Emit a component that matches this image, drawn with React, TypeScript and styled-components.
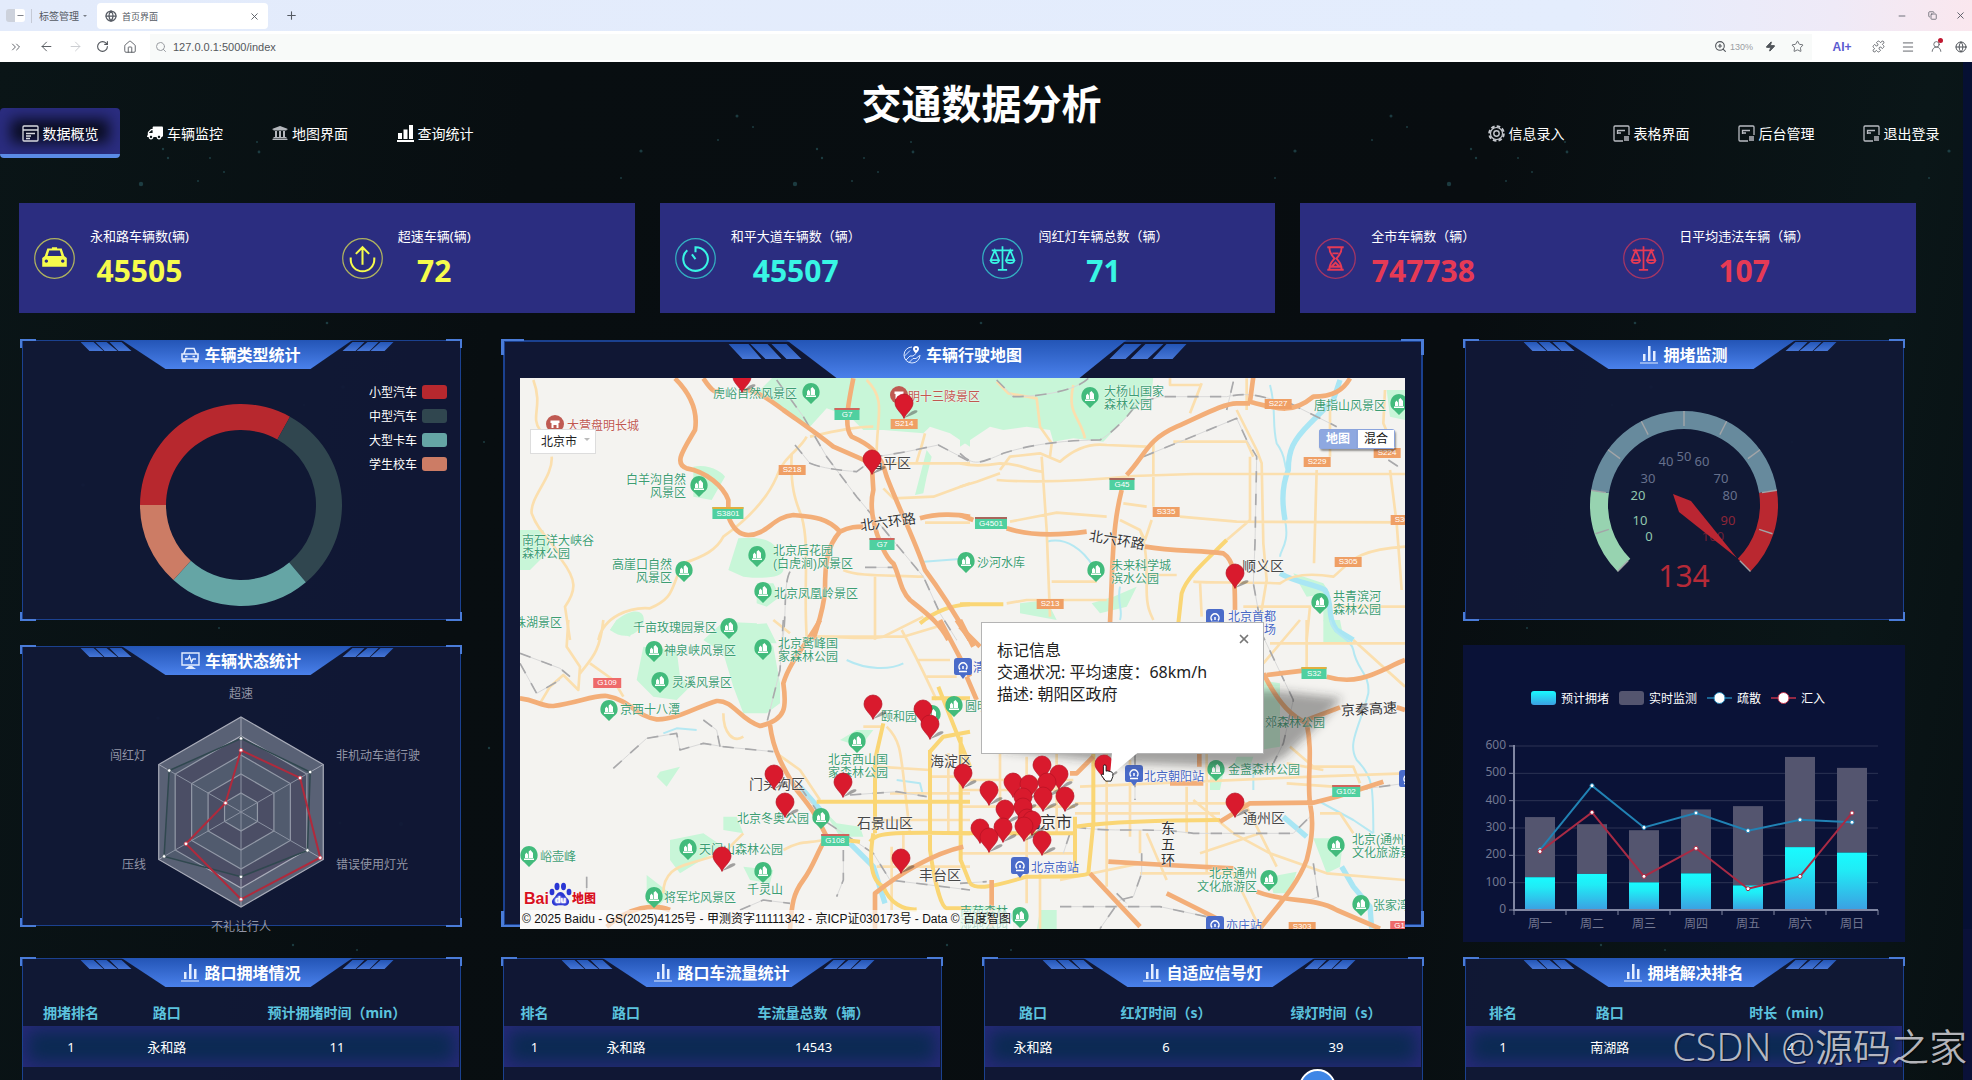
import React from "react";
import styled, { createGlobalStyle, css } from "styled-components";
import {
  ArrowLeft, ArrowRight, ChevronsRight, Copy, Globe, House, Menu, Minus, Plus, Puzzle,
  RotateCw, Search, Star, UserRound, X, Zap, ZoomIn,
} from "lucide-react";
import { FaTruck, FaUniversity } from "react-icons/fa";

const sans = `"Noto Sans", "Noto Sans CJK SC", sans-serif`;
const arial = `"Liberation Sans", "Noto Sans CJK SC", sans-serif`;

const GlobalStyle = createGlobalStyle`
  *, *::before, *::after { box-sizing: border-box; }
  body { margin: 0; background: #080e11; font-family: ${sans}; }
  button, input, select { font: inherit; margin: 0; padding: 0; border: 0; background: none; color: inherit; }
  a { color: inherit; text-decoration: none; }
  h1, h2, p { margin: 0; }
  svg { display: block; flex: none; }
`;

const Window = styled.div`
  display: flex;
  flex-direction: column;
  height: 100vh;
  overflow: hidden;
  position: relative;
`;

/* ---------- browser bar ---------- */

const TabStrip = styled.div`
  flex: none;
  height: 31px;
  display: flex;
  align-items: center;
  padding: 0 0 0 6px;
  color: #555a63;
  font-size: 10px;
  background: linear-gradient(90deg, #e3ebfb 0, #e4edfd 80%, #efeaf7 93%, #fae7ee 100%);
`;
const SideToggle = styled.button`
  width: 19px;
  height: 13px;
  border-radius: 3px;
  background: linear-gradient(90deg, #cdd2dc 0 9px, #fff 9px);
  display: flex;
  justify-content: flex-end;
  align-items: center;
`;
const TabManager = styled.button`
  display: flex;
  align-items: center;
  gap: 4px;
  margin-left: 6px;
  padding: 0 0 0 7px;
  border-left: 1px solid #c5cad6;
  line-height: 14px;
  width: 66px;
  &::after {
    content: "";
    border: 2px solid transparent;
    border-top-color: #777c86;
    border-bottom: 0;
  }
`;
const BrowserTab = styled.div`
  align-self: flex-end;
  width: 171px;
  height: 26px;
  margin-bottom: 2px;
  padding: 0 8px;
  display: flex;
  align-items: center;
  gap: 5px;
  background: #fff;
  border-radius: 4px;
  font-size: 9px;
`;
const TabName = styled.span`
  flex: 1;
`;
const IconButton = styled.button<{ $w: number; $dim?: boolean }>`
  width: ${(p) => p.$w}px;
  height: 24px;
  flex: none;
  display: flex;
  align-items: center;
  justify-content: center;
  position: relative;
  color: ${(p) => (p.$dim ? "#c9cbcf" : "inherit")};
`;
const Spring = styled.div`
  flex: 1;
`;
const Toolbar = styled.div`
  flex: none;
  height: 31px;
  display: flex;
  align-items: center;
  padding-left: 2px;
  color: #50545a;
  background: #fff;
`;
const AddressBar = styled.label`
  flex: 1;
  height: 26px;
  display: flex;
  align-items: center;
  margin-left: 6px;
  padding-left: 5px;
  background: #f8faf9;
  color: #9a9da2;
`;
const AddressInput = styled.input`
  flex: 1;
  min-width: 0;
  padding-left: 6px;
  outline: 0;
  color: #55585c;
  font-family: ${arial};
  font-size: 11px;
`;
const ZoomLevel = styled.span`
  width: 28px;
  font-family: ${arial};
  font-size: 9px;
`;
const AddressActions = styled.div`
  display: flex;
  height: 26px;
  align-items: center;
  margin-right: 10px;
  background: #f8faf9;
`;
const AiButton = styled.button`
  width: 40px;
  font: 700 12px/16px ${arial};
  color: #5b5bd0;
`;
const RedDot = styled.span`
  position: absolute;
  top: 3px;
  right: 7px;
  width: 5px;
  height: 5px;
  border-radius: 50%;
  background: #c01830;
`;

/* ---------- page ---------- */

const Viewport = styled.div`
  flex: 1;
  min-height: 0;
  display: flex;
  position: relative;
  color: #fff;
  background: linear-gradient(100deg, #0a1517 0, #080e11 25%, #080d10 70%, #0a1618 90%, #081012 100%);
`;
const Page = styled.div`
  flex: 1;
  min-width: 0;
  position: relative;
`;
const ScrollTrack = styled.div`
  flex: none;
  width: 9px;
  background: linear-gradient(180deg, #061033 0 867px, #0a1138 867px);
`;
const StarField = styled.svg`
  position: absolute;
  inset: 0;
  width: 100%;
  height: 100%;
`;
const Header = styled.header`
  position: relative;
  display: grid;
  grid-template-columns: 1fr auto 1fr;
  height: 96px;
`;
const Title = styled.h1`
  padding-top: 12px;
  font-size: 40px;
  line-height: 60px;
  font-weight: 700;
`;
const Nav = styled.nav<{ $end?: boolean }>`
  display: flex;
  align-items: flex-end;
  justify-content: ${(p) => (p.$end ? "flex-end" : "flex-start")};
  gap: 5px;
  padding-right: ${(p) => (p.$end ? 2 : 0)}px;
`;
const NavLink = styled.a<{ $active?: boolean }>`
  display: flex;
  align-items: center;
  justify-content: center;
  gap: 4px;
  width: 120px;
  height: 50px;
  padding-top: 4px;
  font-size: 14px;
  white-space: nowrap;
  border-radius: 4px;
  border-bottom: 4px solid transparent;
  ${(p) =>
    p.$active &&
    css`
      background: #090c20;
      border-bottom-color: #5b8be6;
      box-shadow: inset 0 0 14px 11px #2b2d80;
    `}
`;
const Stats = styled.section`
  position: relative;
  display: grid;
  grid-template-columns: repeat(3, 1fr);
  gap: 25px;
  margin: 45px 47px 26px 19px;
`;
const StatCard = styled.div<{ $color: string }>`
  display: grid;
  grid-template-columns: 1fr 1fr;
  height: 110px;
  padding-top: 22px;
  background: #2b2d80;
  color: ${(p) => p.$color};
`;
const Stat = styled.div`
  display: flex;
  align-items: flex-start;
  gap: 15px;
  padding-left: 15px;
  & > svg { margin-top: 13px; }
`;
const StatText = styled.div`
  text-align: center;
`;
const StatLabel = styled.p`
  color: #fff;
  font-size: 13px;
  line-height: 22px;
`;
const StatValue = styled.p`
  font-size: 30px;
  line-height: 48px;
  font-weight: 700;
`;
const Main = styled.main`
  position: relative;
  display: grid;
  grid-template-columns: repeat(4, 1fr);
  align-items: start;
  column-gap: 39px;
  row-gap: 15px;
  padding: 0 58px 0 20px;
`;
const Column = styled.div`
  display: grid;
  gap: 24px;
`;

const edge = "#4a7cd8";
const Panel = styled.section<{ $h: number; $big?: boolean }>`
  position: relative;
  height: ${(p) => p.$h}px;
  padding: 0 ${(p) => (p.$big ? 19 : 3)}px;
  grid-column: ${(p) => (p.$big ? "span 2" : "auto")};
  &::before {
    content: "";
    position: absolute;
    inset: 1px 1px 1px 2px;
    background: rgba(17, 24, 54, 0.94);
    border: ${(p) => (p.$big ? 2 : 1)}px solid #1b418f;
  }
  &::after {
    --w: ${(p) => (p.$big ? 23 : 16)}px;
    --h: ${(p) => (p.$big ? 16 : 9)}px;
    --t: ${(p) => (p.$big ? 3 : 2)}px;
    content: "";
    position: absolute;
    inset: 0;
    pointer-events: none;
    background:
      linear-gradient(${edge} 0 0) 0 0 / var(--w) 2px,
      linear-gradient(${edge} 0 0) 0 0 / var(--t) var(--h),
      linear-gradient(${edge} 0 0) 100% 0 / var(--w) 2px,
      linear-gradient(${edge} 0 0) 100% 0 / var(--t) var(--h),
      linear-gradient(${edge} 0 0) 0 100% / var(--w) 2px,
      linear-gradient(${edge} 0 0) 0 100% / var(--t) var(--h),
      linear-gradient(${edge} 0 0) 100% 100% / var(--w) 2px,
      linear-gradient(${edge} 0 0) 100% 100% / var(--t) var(--h);
    background-repeat: no-repeat;
  }
`;
const PanelHead = styled.header<{ $h: number }>`
  position: relative;
  display: flex;
  justify-content: center;
  height: ${(p) => p.$h}px;
  & > svg {
    position: absolute;
    top: 1px;
    left: 50%;
    transform: translateX(-50%);
  }
`;
const PanelTitle = styled.h2`
  position: relative;
  display: flex;
  align-items: center;
  gap: 5px;
  height: 32px;
  font-size: 16px;
  line-height: 24px;
  font-weight: 700;
`;
const PieBody = styled.div`
  position: relative;
  display: grid;
  grid-template-columns: 1fr auto 1fr;
  & > svg { grid-column: 2; }
`;
const Legend = styled.ul`
  grid-column: 3;
  grid-row: 1;
  justify-self: end;
  margin: 0 12px 0 0;
  padding: 0;
  list-style: none;
`;
const LegendItem = styled.li`
  display: flex;
  align-items: center;
  gap: 5px;
  height: 24px;
  font-size: 12px;
`;
const Swatch = styled.span<{ $color: string }>`
  width: 25px;
  height: 14px;
  border-radius: 3px;
  background: ${(p) => p.$color};
`;
const ChartBody = styled.div`
  position: relative;
  display: flex;
  justify-content: center;
`;
const PlainPanel = styled.section`
  height: 297px;
  padding-top: 43px;
  background: #0a1237;
`;
const ChartLegend = styled.ul`
  display: flex;
  justify-content: center;
  gap: 10px;
  height: 20px;
  margin: 0 12px 24px 0;
  padding: 0;
  list-style: none;
`;
const ChartLegendItem = styled.li`
  display: flex;
  align-items: center;
  gap: 5px;
  font-size: 12px;
`;
const DataTable = styled.table`
  position: relative;
  width: 100%;
  table-layout: fixed;
  border-collapse: collapse;
  text-align: center;
  th {
    height: 28px;
    padding: 0;
    color: #5cc3de;
    font-size: 14px;
    font-weight: 700;
  }
  td {
    height: 41px;
    padding: 0;
    font-size: 13px;
  }
  tbody tr {
    background: #0b2a52;
    box-shadow: inset 0 0 18px 4px #29297a;
  }
`;
const Col = styled.col<{ $w: number }>`
  width: ${(p) => p.$w}%;
`;

/* ---------- map ---------- */

const MapBox = styled.div`
  position: relative;
  z-index: 1;
  height: 551px;
  overflow: hidden;
  background: #f4f3f0;
  & > svg { position: absolute; top: 0; left: 0; }
`;
const tone: Record<string, string> = { park: "#3d9d73", red: "#c05850", dark: "#484848", blue: "#4767c4", road: "#333333" };
const MapLabel = styled.span<{ $x: number; $y: number; $tone: string; $size: number; $end?: boolean; $rot?: number }>`
  position: absolute;
  top: ${(p) => p.$y - 8}px;
  ${(p) => (p.$end ? css`right: calc(100% - ${p.$x}px);` : css`left: ${p.$x}px;`)}
  text-align: ${(p) => (p.$end ? "right" : "left")};
  font: 400 ${(p) => p.$size}px/13px ${arial};
  line-height: ${(p) => (p.$size > 12 ? 16 : 13)}px;
  padding-top: ${(p) => (p.$size > 12 ? 0 : 2)}px;
  color: ${(p) => tone[p.$tone]};
  white-space: pre;
  text-shadow: 0 0 1px #fff, 0 0 2px #fff;
  rotate: ${(p) => p.$rot || 0}deg;
`;
const Shield = styled.span<{ $x: number; $y: number; $bg: string; $top?: string }>`
  position: absolute;
  left: ${(p) => p.$x}px;
  top: ${(p) => p.$y}px;
  translate: -50% -50%;
  min-width: 25px;
  padding: 0 4px;
  font: 400 8px/10px ${arial};
  text-align: center;
  color: #fff;
  background: ${(p) => p.$bg};
  border-top: ${(p) => (p.$top ? `2px solid ${p.$top}` : 0)};
`;
const Spot = styled.span<{ $x: number; $y: number }>`
  position: absolute;
  left: ${(p) => p.$x}px;
  top: ${(p) => p.$y}px;
`;
const CityPicker = styled.label`
  position: absolute;
  top: 51px;
  left: 10px;
  &::after {
    content: "";
    position: absolute;
    right: 6px;
    top: 9px;
    border: 3px solid transparent;
    border-top-color: #bbb;
  }
`;
const CitySelect = styled.select`
  appearance: none;
  width: 66px;
  height: 25px;
  padding-left: 10px;
  color: #222;
  font-size: 12px;
  background: #fff;
  border: 1px solid #ddd;
`;
const MapTypes = styled.div`
  position: absolute;
  top: 51px;
  right: 10px;
  display: flex;
  border-radius: 3px;
  overflow: hidden;
  box-shadow: 1px 2px 2px rgba(0, 0, 0, 0.4);
`;
const MapType = styled.button<{ $on?: boolean }>`
  width: 38px;
  height: 20px;
  font-size: 12px;
  line-height: 18px;
  font-weight: ${(p) => (p.$on ? 700 : 400)};
  color: ${(p) => (p.$on ? "#fff" : "#111")};
  background: ${(p) => (p.$on ? "#8ea8e0" : "#fff")};
  border: 1px solid #8ba4dc;
`;
const Popup = styled.div`
  position: absolute;
  left: 461px;
  top: 244px;
  width: 283px;
  height: 132px;
  padding: 16px 15px;
  color: #222;
  font-size: 16px;
  line-height: 22px;
  background: #fff;
  border: 1px solid #b4b4b4;
`;
const PopupClose = styled.button`
  position: absolute;
  top: 9px;
  right: 12px;
  color: #777;
`;
const BaiduLogo = styled.div`
  position: absolute;
  left: 4px;
  bottom: 22px;
  display: flex;
  align-items: flex-end;
  color: #d8101e;
  font: 700 16px/16px ${arial};
  text-shadow: 0 0 2px #fff, 0 0 2px #fff;
`;
const LogoSmall = styled.span`
  font-size: 12px;
  font-weight: 900;
`;
const Copyright = styled.p`
  position: absolute;
  left: 0;
  bottom: 0;
  padding: 0 2px;
  font: 400 12px/19px ${arial};
  color: #111;
  background: rgba(255, 255, 255, 0.6);
  white-space: nowrap;
`;
const Bubble = styled.button`
  position: absolute;
  left: calc(66.8% - 18px);
  top: calc(100vh - 11px);
  width: 37px;
  height: 37px;
  border-radius: 50%;
  border: 2px solid #fff;
  background: #3f86e6;
`;
const Watermark = styled.div`
  position: absolute;
  right: 5px;
  bottom: 6px;
  font-size: 38px;
  line-height: 56px;
  font-weight: 350;
  white-space: nowrap;
  color: rgba(212, 212, 218, 0.85);
  text-shadow: 1px 1px 1px rgba(0, 0, 0, 0.5);
  pointer-events: none;
`;

/* ---------- icons ---------- */

const DocIcon = () => (
  <svg width="17" height="17" viewBox="0 0 17 17" fill="none" stroke="#d8dae0" strokeWidth="1.3">
    <rect x="1" y="1" width="15" height="15" rx="1" />
    <path d="M1 5h15M4 8.500h9M4 11h5M4 13.500h4" />
  </svg>
);
const FormIcon = () => (
  <svg width="17" height="17" viewBox="0 0 17 17" fill="none" stroke="#b9bcc2" strokeWidth="1.300">
    <path d="M10 16H2a1 1 0 0 1-1-1V2a1 1 0 0 1 1-1h13a1 1 0 0 1 1 1v8M4.500 9V5.500H12M4.500 8H8" />
    <rect x="11" y="11" width="5" height="5" fill="#8d9096" stroke="none" />
  </svg>
);
const GearIcon = () => (
  <svg width="17" height="17" viewBox="0 0 17 17" fill="none" stroke="#c4c7cd">
    <circle cx="8.500" cy="8.500" r="7.300" strokeWidth="2" strokeDasharray="3.600 2.133" />
    <circle cx="8.500" cy="8.500" r="6" strokeWidth="1.200" />
    <circle cx="8.500" cy="8.500" r="2.700" strokeWidth="1.400" />
  </svg>
);
const SolidBars = () => (
  <svg width="17" height="17" viewBox="0 0 17 17" fill="#fff">
    <path d="M0 15h17v2H0zM1 8h4v6H1zM6.500 4.500h4V14h-4zM12 0h4v14h-4z" />
  </svg>
);
const BarsIcon = () => (
  <svg width="18" height="18" viewBox="0 0 18 18" fill="#e3edff">
    <path d="M0 16.500h18v1H0zM3 8h2.500v7H3zM8 0h2.500v15H8zM13 5h2.500v10H13z" />
  </svg>
);
const CarIcon = () => (
  <svg width="18" height="18" viewBox="0 0 18 18" fill="none" stroke="#e3edff" strokeWidth="1.600">
    <path d="M1 8h16v5H1zM3 7.500l2-5h8l2 5M4 10.500h2.500M11.500 10.500H14M2 13.500v2h2v-2M14 13.500v2h2v-2" />
  </svg>
);
const MonitorIcon = () => (
  <svg width="19" height="18" viewBox="0 0 19 18" fill="none" stroke="#e3edff" strokeWidth="1.400">
    <path d="M1 1h17v12H1zM4 7h3l1.500-3 2 6 1.500-3h3" />
    <path d="M4 17l4-3h3l4 3z" fill="#e3edff" stroke="none" />
  </svg>
);
const RouteIcon = () => (
  <svg width="18" height="18" viewBox="0 0 18 18" fill="none" stroke="#dce8ff" strokeWidth="1">
    <path d="M9 1a8 8 0 1 0 8 8M1.500 10 7 4.500M3 14l4-4h3l3-2.500M6 16.500l4-4h3l3.500-3" />
    <path fillRule="evenodd" d="M13 0a3 3 0 0 1 3 3c0 2-3 4.500-3 4.500S10 5 10 3a3 3 0 0 1 3-3zm0 2a1 1 0 1 0 .1 0z" fill="#fff" stroke="none" />
  </svg>
);

const glyphs: Record<string, React.ReactNode> = {
  car: (
    <g fill="currentColor" stroke="none">
      <path fillRule="evenodd" d="M17.500 9h5v1.200h4.500l2.500 7.300 2.500 2V28H8v-8.500l2.500-2 2.500-7.300h4.500zM14.800 12.200l-1.600 5.300h13.600l-1.600-5.300zM12 21a1.600 1.600 0 1 0 .1 0zM28 21a1.600 1.600 0 1 0 .1 0z" />
    </g>
  ),
  up: <path d="M20 26V9M13.500 15.500 20 9l6.500 6.500M8.500 19v2a11.500 11.500 0 0 0 23 0v-2" strokeWidth="2" />,
  timer: <path d="M20 14V9a12 11.500 0 1 1-8 3M20 20.500l-3.500-4.500" strokeWidth="2" />,
  scale: (
    <path d="M20 8v23M15.500 31h9M9.500 12h21M12.500 12l-4 9.500h8zM27.500 12l-4 9.500h8zM8.500 21.500c0 4 8 4 8 0M23.500 21.500c0 4 8 4 8 0" strokeWidth="1.700" />
  ),
  hourglass: (
    <path d="M12 9h16M12 31h16M14 9c0 7 4 9 5 11-1 2-5 4-5 11M26 9c0 7-4 9-5 11 1 2 5 4 5 11M16 28h8l-4-4zM17 15h6" strokeWidth="1.900" />
  ),
};
const StatIcon = ({ name }: { name: string }) => (
  <svg width="41" height="41" viewBox="0 0 40 40" fill="none" stroke="currentColor">
    <circle cx="20" cy="20" r="19.300" strokeWidth="1.200" opacity="0.65" />
    {glyphs[name]}
  </svg>
);

/* ---------- panel header art ---------- */

const Blue = ({ id }: { id: string }) => (
  <defs>
    <linearGradient id={id} x1="0" y1="0" x2="0" y2="1">
      <stop offset="0" stopColor="#2355b6" />
      <stop offset="1" stopColor="#4a80ea" />
    </linearGradient>
    <linearGradient id={`${id}s`} x1="0" y1="0" x2="0" y2="1">
      <stop offset="0" stopColor="#2355b6" />
      <stop offset="1" stopColor="#4676d6" />
    </linearGradient>
  </defs>
);
const HeadArt = () => (
  <svg width="321" height="29" viewBox="0 0 321 29">
    <Blue id="head" />
    <path fill="url(#heads)" d="M0 2h13l10 9H9zM15 2h11l11 9H24zM29 2h12l10 9H38zM313 2h-13l-10 9h14zM298 2h-11l-11 9h13zM284 2h-12l-10 9h13z" />
    <path fill="url(#head)" d="M41 0h231l-42 29H85z" />
  </svg>
);
const HeadArtWide = () => (
  <svg width="469" height="38" viewBox="0 0 469 38">
    <Blue id="headw" />
    <path fill="url(#headws)" d="M0 4h20l13 15H14zM22 4h17l14 15H37zM43 4h15l15 15H58zM458 4h-20l-14 15h20zM435 4h-18l-15 15h17zM413 4h-17l-15 15h16z" />
    <path fill="url(#headw)" d="M58 0h340l-47 38H108z" />
  </svg>
);
const Head = ({ icon, text, wide }: { icon: React.ReactNode; text: string; wide?: boolean }) => (
  <PanelHead $h={wide ? 39 : 41}>
    {wide ? <HeadArtWide /> : <HeadArt />}
    <PanelTitle>{icon}{text}</PanelTitle>
  </PanelHead>
);

/* ---------- charts ---------- */

const polar = (cx: number, cy: number, r: number, deg: number) => {
  const a = (deg * Math.PI) / 180;
  return [cx + r * Math.sin(a), cy - r * Math.cos(a)];
};
const ring = (cx: number, cy: number, ro: number, ri: number, a: number, b: number) => {
  const big = b - a > 180 ? 1 : 0;
  return `M${polar(cx, cy, ro, a)}A${ro} ${ro} 0 ${big} 1 ${polar(cx, cy, ro, b)}L${polar(cx, cy, ri, b)}A${ri} ${ri} 0 ${big} 0 ${polar(cx, cy, ri, a)}Z`;
};

const vehicleTypes = [
  { name: "小型汽车", color: "#b7282e", from: -90, to: 29 },
  { name: "中型汽车", color: "#30464f", from: 29, to: 140 },
  { name: "大型卡车", color: "#65a5a5", from: 140, to: 222 },
  { name: "学生校车", color: "#cc7c65", from: 222, to: 270 },
];
const Donut = () => (
  <svg width="202" height="226" viewBox="0 0 202 226">
    {vehicleTypes.map((v) => (
      <path key={v.name} d={ring(101, 125, 101, 75, v.from, v.to)} fill={v.color} />
    ))}
  </svg>
);

const hex = (vals: number[]) => vals.map((v, i) => polar(221, 126, 95 * v, i * 60).join(",")).join(" ");
const seriesRed = [0.65, 0.718, 0.963, 0.919, 0.669, 0.188];
const seriesDark = [0.774, 0.841, 0.808, 0.682, 0.935, 0.873];
const Radar = () => (
  <svg width="436" height="260" viewBox="3 0 436 260" fontSize="12" fill="#9295a6" overflow="visible">
    {[1, 0.8, 0.6, 0.4, 0.2].map((s, i) => (
      <polygon key={s} points={hex([s, s, s, s, s, s])} fill={i % 2 ? "#52516a" : "#596175"} stroke="#a9acb9" strokeWidth="1.200" />
    ))}
    {[0, 60, 120, 180, 240, 300].map((a) => {
      const [x, y] = polar(221, 126, 95, a);
      return <line key={a} x1="221" y1="126" x2={x} y2={y} stroke="#9fa3b2" />;
    })}
    <polygon points={hex(seriesDark)} fill="rgba(47,69,84,.18)" stroke="#30484f" strokeWidth="1.500" />
    <polygon points={hex(seriesRed)} fill="none" stroke="#b02a3c" strokeWidth="2" />
    {[seriesRed, seriesDark].map((s, k) =>
      s.map((v, i) => {
        const [x, y] = polar(221, 126, 95 * v, i * 60);
        return <circle key={`${k}-${i}`} cx={x} cy={y} r="1.800" fill="#fff" stroke={k ? "#47555f" : "#d04050"} strokeWidth="0.800" />;
      })
    )}
    <text x="221" y="12" textAnchor="middle">超速</text>
    <text x="126" y="74" textAnchor="end">闯红灯</text>
    <text x="316" y="74">非机动车道行驶</text>
    <text x="126" y="183" textAnchor="end">压线</text>
    <text x="316" y="183">错误使用灯光</text>
    <text x="221" y="245" textAnchor="middle">不礼让行人</text>
  </svg>
);

const gaugeLabels: [string, number, number, string][] = [
  ["0", -35, 31, "#91c7ae"], ["10", -44, 15, "#91c7ae"], ["20", -46, -10, "#91c7ae"],
  ["30", -36, -27, "#66708c"], ["40", -18, -44, "#66708c"], ["50", 0, -49, "#66708c"],
  ["60", 18, -44, "#66708c"], ["70", 37, -27, "#66708c"], ["80", 46, -10, "#66708c"],
  ["90", 44, 15, "#8c2638"], ["100", 29, 31, "#6c2038"],
];
const Gauge = () => (
  <svg width="220" height="220" viewBox="-110 -125 220 220" fontSize="13" textAnchor="middle">
    <path d={ring(0, 0, 94, 76, -135, -81)} fill="#97d3b0" />
    <path d={ring(0, 0, 94, 76, -81, 81)} fill="#678a9d" />
    <path d={ring(0, 0, 94, 76, 81, 135)} fill="#ba2830" />
    {Array.from({ length: 11 }, (_, i) => {
      const a = -135 + i * 27;
      const [x1, y1] = polar(0, 0, i === 1 || i === 9 ? 93 : 94, a);
      const [x2, y2] = polar(0, 0, 79, a);
      return <line key={i} x1={x1} y1={y1} x2={x2} y2={y2} stroke="#a3a5a8" strokeWidth="1.400" />;
    })}
    {gaugeLabels.map(([t, x, y, c]) => (
      <text key={t} x={x} y={y + 5} fill={c}>{t}</text>
    ))}
    <path d="M-11-11 7-4 53 53-5 7z" fill="#ba2632" />
    <text x="0" y="82" fontSize="30" fill="#b52a38">134</text>
  </svg>
);

const days = ["周一", "周二", "周三", "周四", "周五", "周六", "周日"];
const planned = [120, 132, 101, 134, 90, 230, 210];
const total = [340, 314, 292, 368, 380, 560, 520];
const outflow = [220, 455, 302, 355, 290, 330, 321];
const inflow = [214, 357, 123, 226, 78, 123, 355];
const yOf = (v: number) => 178 - (v * 164) / 600;
const xOf = (i: number) => 77 + i * 52;
const Combo = () => (
  <svg width="442" height="210" viewBox="0 0 442 210" fontSize="12" fill="#737892">
    <defs>
      <linearGradient id="cyan" x1="0" y1="0" x2="0" y2="1">
        <stop offset="0" stopColor="#18fbff" />
        <stop offset="0.300" stopColor="#20ecf6" />
        <stop offset="1" stopColor="#3c9fe2" />
      </linearGradient>
    </defs>
    {[0, 100, 200, 300, 400, 500, 600].map((v) => (
      <g key={v}>
        <path d={`M51 ${yOf(v)}H415`} stroke="#2c3354" />
        <path d={`M46 ${yOf(v)}h5`} stroke="#8086a2" />
        <text x="43" y={yOf(v) + 3} textAnchor="end">{v}</text>
      </g>
    ))}
    {days.map((d, i) => (
      <g key={d}>
        <rect x={xOf(i) - 15} y={yOf(total[i])} width="30" height={yOf(planned[i]) - yOf(total[i])} fill="#54556f" />
        <rect x={xOf(i) - 15} y={yOf(planned[i])} width="30" height={178 - yOf(planned[i])} fill="url(#cyan)" />
        <text x={xOf(i)} y="196" textAnchor="middle">{d}</text>
      </g>
    ))}
    <path d="M51 13V178H415" stroke="#8086a2" strokeWidth="2" fill="none" />
    <path d={[51, 103, 155, 207, 259, 311, 363, 415].map((x) => `M${x} 178v5`).join("")} stroke="#8086a2" />
    {[{ s: outflow, c: "#2182b4" }, { s: inflow, c: "#a92b45" }].map(({ s, c }) => (
      <g key={c} stroke={c}>
        <polyline points={s.map((v, i) => `${xOf(i)},${yOf(v)}`).join(" ")} fill="none" strokeWidth="2" />
        {s.map((v, i) => <circle key={i} cx={xOf(i)} cy={yOf(v)} r="2" fill="#fff" />)}
      </g>
    ))}
  </svg>
);
const LineMark = ({ color }: { color: string }) => (
  <svg width="25" height="14" viewBox="0 0 25 14" stroke={color}>
    <path d="M0 7h25" strokeWidth="1.500" />
    <circle cx="12.500" cy="7" r="5.500" fill="#fff" />
  </svg>
);

/* ---------- map drawing: four tiles, three units to a pixel ---------- */

type Tile = { at: string; green: string; minor: string; major: string; highway: string; rail: string; water: string; river: string };
const tiles: Tile[] = [
  {
    at: "translate(-90 -144)",
    green: "M850 140H1440V350L1380 310 1320 290 1300 310 1180 300 1120 300 1080 260 1010 235 960 290 880 240 800 190ZM610 410C660 400 700 430 705 440L665 510 610 500ZM745 625C800 620 870 620 875 700 900 740 840 750 760 740L715 720ZM90 600 160 600 180 660 120 720 90 720ZM380 870C430 830 470 840 460 880 440 920 400 930 360 900ZM1310 360 1325 380 1310 440 1300 490 1275 495ZM760 885 830 880 860 940H740ZM800 760h50l20 40-40 30-30-10Z",
    minor: "M130 150C160 230 120 260 150 300M185 380C190 440 120 500 125 550 150 620 200 640 215 690 260 750 260 780 225 830L240 930M325 930C340 860 420 830 480 835 560 800 540 770 580 700 640 680 680 660 700 620 770 570 830 510 860 440 880 380 930 360 950 320M905 370C900 480 920 520 935 560 960 650 940 760 950 920M1130 150C1190 210 1160 260 1160 370M960 320C1050 300 1100 290 1150 290M1305 310C1290 370 1280 390 1280 400M1190 400H1440M1180 475 1210 505 1330 500 1440 460M1060 720C1100 740 1200 735 1300 740M1155 740V930M1305 578H1440M960 920C1050 920 1150 930 1180 920L1300 860",
    major: "M1290 880C1340 840 1390 825 1440 823",
    highway: "M555 145C600 190 625 240 615 300 580 360 550 400 590 415 650 425 700 470 715 510V560C730 600 750 615 775 615 830 615 850 560 910 555 960 560 1010 560 1050 605 1080 590 1100 590 1120 590M1290 565C1340 550 1400 552 1440 560M640 145C670 190 680 190 690 180M760 180C800 180 840 210 880 240 950 290 980 310 1030 350L1145 400M1090 145C1075 220 1060 290 1085 320 1130 340 1170 360 1190 440 1220 520 1270 620 1305 720 1350 780 1400 860 1440 930M1050 605C1010 650 1005 700 1005 780 1000 850 980 890 970 930M1145 400 1150 480C1130 560 1180 680 1210 700 1230 740 1230 780 1260 810 1310 850 1350 880 1375 930",
    rail: "M860 150 940 260 1010 380 1100 500 1300 740 1350 850 1400 930M915 345 960 400C1000 415 1040 420 1100 425L1160 380 1250 365 1345 345 1440 395M1125 712H1210M900 725C880 760 890 860 878 930",
    water: "M1300 695 1440 685",
    river: "",
  },
  {
    at: "translate(1320 -144)",
    green: "M0 140H580L575 190 500 260 430 335 340 325 280 335 270 300 200 290 130 300 90 290 0 350ZM180 820 260 810 290 870 180 850ZM395 820 460 800 530 770 500 830 420 850ZM1280 180 1335 180V270L1290 260ZM1090 790 1120 900 1180 940H1090ZM1000 730 1090 760 1110 790 1040 800Z",
    minor: "M110 155 145 190 230 205 240 290 275 340 270 380M340 165C320 250 360 260 375 325M0 400C40 410 90 405 120 400 180 400 200 420 245 425M110 450C250 460 400 450 520 438L700 432H1335M245 380 260 600 270 860M120 420 150 380 240 370 300 395C350 350 400 340 440 345L560 350M0 470 50 455 120 430M580 335V530M575 570 555 630 540 600 480 570M490 520 560 530M640 335H860L880 380M150 575 290 548 440 560M660 560 830 575 1335 577M830 240 890 360 905 400 910 640 920 750 900 870M860 145 860 240M870 380V570L800 630M725 160 690 250M630 145V165H720M1070 420 1062 700M275 755H410M140 820 200 810H440M560 735H650M700 755C750 760 850 755 960 760 1000 730 1060 730 1120 740 1170 700 1180 660 1335 650M1290 420 1310 580 1325 780M1110 240V380M850 830 1050 830 1040 930M540 600C560 650 560 700 560 780 560 830 570 850 580 870M720 755 725 860M1275 180 1270 280 1300 350M1120 830H1335",
    major: "M0 823H130M800 630C740 690 680 740 665 790L655 880",
    highway: "M880 140 870 215C960 240 1000 250 1060 200 1120 200 1150 180 1170 145M500 435C560 370 560 330 650 290 720 260 790 220 830 220H870M485 480C470 540 460 600 455 760L450 880M0 555 40 570M140 595C200 615 270 620 380 605M555 650C640 665 720 660 790 670 820 690 825 720 825 840M0 870 40 950",
    rail: "M0 370C40 410 60 400 130 370 220 340 330 330 420 330 470 300 520 240 530 220L600 200H800C850 190 880 190 960 215M550 380 660 335 830 265 860 330 890 380 885 640 880 760 900 870M820 155 800 240M990 220 1130 290M1285 390 1315 410M110 150 160 200C250 200 350 180 385 145",
    water: "M930 165C950 240 935 280 950 340 980 380 970 400 980 420M975 570C990 640 960 660 960 680M260 635C320 620 370 660 400 710M480 770C470 820 490 840 480 870",
    river: "M1140 150 1120 210 1050 280C1000 330 985 360 985 420 960 480 970 540 975 570M960 730C1010 760 1060 760 1095 780 1120 830 1100 860 1130 900L1180 930",
  },
  {
    at: "translate(-90 726)",
    green: "M700 5 800 10 850 80 870 190 870 250 830 280 760 280 730 200 700 100 640 60ZM460 80 560 90 570 170 600 200 560 240 490 230 440 180ZM380 0H440L420 50 360 30ZM510 455 570 440 530 500 500 470ZM540 660 640 640 700 680 570 760 540 720ZM700 590 740 590 760 640 700 630ZM760 740 850 750 840 790 780 780ZM470 765 540 820 500 865 470 850ZM1000 570 1040 610 1110 620 1120 650 1050 650ZM1050 360 1100 330 1150 330 1110 380Z",
    minor: "M235 0 230 80 270 140 265 210 220 165 180 200 150 250M340 0C330 100 300 120 270 160M700 280C700 340 730 370 760 350M300 130 370 180 400 230M860 400 930 450 990 540M520 820C520 760 560 740 600 730L700 700 760 640M880 690C930 660 960 670 1000 660M1235 30C1290 130 1320 200 1340 240M1120 320H1180M1190 320C1240 370 1230 400 1260 640M1280 120H1380M1310 170H1400M1320 470H1440M1160 600H1440M1160 740H1440M950 50H1130L1240 50 1340 20M1205 680V870M1160 440 1320 450M1200 520H1440M850 0 900 40M1375 400V640M1240 640V760",
    major: "M980 545H1440M1180 310 1155 420V640M1140 665C1160 640 1180 635 1440 640M1320 390V690C1330 760 1350 860 1370 865H1440M1320 395 1360 350 1440 335M1412 350V720L1440 790M1325 235H1440M1110 665 1010 655M1150 640C1130 760 1160 790 1180 800 1200 850 1240 870 1280 868M1345 200 1440 440",
    highway: "M90 235C140 240 150 260 190 258 260 250 310 225 350 228 420 240 440 290 500 298 560 300 620 260 680 243 730 240 750 300 810 318 890 300 890 260 880 190 900 120 960 60 990 0M840 315C850 400 890 460 920 510 960 560 970 570 1010 650 980 700 970 740 940 780 910 820 905 850 900 930M1155 926V820C1230 760 1330 700 1420 680M1350 0 1440 170M1400 0 1440 60M350 920C420 860 490 850 540 870",
    rail: "M90 100 210 145 240 170M90 130 140 220 210 180M370 445 470 355 560 340 570 390 640 370 700 380 850 395M690 380 680 330 640 300M880 0 870 150 830 310M930 500 1000 600 1150 700 1200 780 1440 810M1080 525 1220 515 1310 530M1060 690V780L1040 830M750 870 820 840 900 850M290 770V820",
    water: "M520 340 560 325 620 330M1070 120C1130 150 1200 150 1240 130M1220 480 1290 490 1300 530",
    river: "M1080 670 1150 740 1185 850M930 500 1000 580",
  },
  {
    at: "translate(1320 726)",
    green: "M900 180 960 190V380L900 390ZM1090 0H1140L1150 50 1110 60ZM1060 655H1150L1140 740 1100 760ZM930 770 1010 755 990 820H940ZM240 870H290V930H230ZM0 860H130V930H0ZM750 460h40l-10 50h-30ZM830 410h50l-10 30h-50Z",
    minor: "M345 550H860M345 580H780M360 500 1060 470 1335 460M540 630V700M700 540 820 640 930 700 1100 760 1335 780M720 700 900 640M980 490 1120 500M1080 580H1140L1180 640M990 380 1060 440M930 70H1335M1040 0V150M540 760H850M300 780 540 730M1040 440H1180L1200 490M0 480H340M0 510H340M200 410V850M240 760V926M0 560H345M0 700H345M290 400V640M440 400V800M510 420V650M680 500V640M740 400V760M860 560 950 740M120 400V640M1020 0 910 130M980 430 1090 450M560 640 620 780M1180 60 1335 200M820 760 900 926",
    major: "M345 590V760M0 640H345M345 620C420 610 560 600 780 600M400 400V610L385 760C370 770 300 770 200 770 100 800 50 810 30 790 0 700M470 400V800C440 850 400 860 300 858L0 855M345 650H1030L1050 630M605 470 615 600M625 730V790C620 830 520 870 480 926M780 820 720 900M560 400 600 450M260 770V858M90 540V780M120 400V480M0 335H60M290 860 300 926",
    highway: "M910 160C960 260 1000 290 1040 310 1060 400 1040 470 1050 550 1065 620 1050 680 1040 720 1010 800 950 860 900 926M920 165 1030 152M1100 170C1200 200 1260 150 1335 120M1040 300 1140 262M1310 262 1335 270M780 605 870 550 1060 548 1130 530 1270 485M330 460H350L400 410M445 725 620 735 820 745M890 815C980 850 1060 830 1130 870L1260 926M95 926V780M390 760 540 920M620 820 780 900M630 490H730M718 400V440M0 20 60 80M20 170 50 240",
    rail: "M525 400V540M345 620C450 640 560 620 700 640H1000L1060 580M545 700V760L520 830 480 840 420 926M470 820 500 850M300 860H600L740 890M900 30 1000 240 970 370 940 430M1190 510 1335 490M1060 730 1075 830 1050 840M0 790 80 785M330 640 310 700",
    water: "M1110 0C1120 50 1170 50 1180 90 1190 150 1230 160 1225 220 1200 320 1160 370 1190 420 1240 470 1240 500 1240 640M1070 540 1180 600 1240 640M880 430V510",
    river: "M970 590 1040 650M1145 740 1180 800 1230 860 1235 926",
  },
];
const MapArt = () => (
  <svg width="885" height="551" viewBox="0 0 2655 1653" fill="none" strokeLinejoin="round">
    {tiles.map((t) => <path key={t.at} transform={t.at} d={t.green} fill="#c8f6d8" />)}
    {tiles.map((t) => (
      <g key={t.at} transform={t.at}>
        <path d={t.water} stroke="#b5e8f2" strokeWidth="6" />
        <path d={t.river} stroke="#a9e6f4" strokeWidth="16" />
        <path d={t.minor} stroke="#fbdfae" strokeWidth="8" />
        <path d={t.rail} stroke="#d9d9d9" strokeWidth="3" />
        <path d={t.rail} stroke="#a9a9ab" strokeWidth="5" strokeDasharray="34 34" />
      </g>
    ))}
    {tiles.map((t) => (
      <g key={t.at} transform={t.at}>
        <path d={t.major} stroke="#fad675" strokeWidth="12" />
        <path d={t.highway} stroke="#f3ae78" strokeWidth="14" />
      </g>
    ))}
  </svg>
);

type Label = { x: number; y: number; t: string; c?: string; s?: number; end?: boolean; rot?: number };
const labels: Label[] = [
  { x: 193, y: 16, t: "虎峪自然风景区" }, { x: 47, y: 48, t: "大营盘明长城", c: "red" },
  { x: 166, y: 102, t: "白羊沟自然\n风景区", end: true }, { x: 2, y: 163, t: "南石洋大峡谷\n森林公园" },
  { x: 152, y: 187, t: "高崖口自然\n风景区", end: true }, { x: 253, y: 173, t: "北京后花园\n(白虎涧)风景区" },
  { x: 254, y: 216, t: "北京凤凰岭景区" }, { x: 113, y: 250, t: "千亩玫瑰园景区" }, { x: -6, y: 245, t: "珠湖景区" },
  { x: 388, y: 19, t: "明十三陵景区", c: "red" }, { x: 584, y: 14, t: "大杨山国家\n森林公园" },
  { x: 794, y: 28, t: "唐指山风景区" }, { x: 457, y: 185, t: "沙河水库" }, { x: 591, y: 188, t: "未来科学城\n滨水公园" },
  { x: 813, y: 219, t: "共青滨河\n森林公园" }, { x: 756, y: 239, t: "北京首都\n机场", c: "blue", end: true },
  { x: 144, y: 273, t: "神泉峡风景区" }, { x: 258, y: 266, t: "北京鹫峰国\n家森林公园" }, { x: 152, y: 305, t: "灵溪风景区" },
  { x: 100, y: 332, t: "京西十八潭" }, { x: 361, y: 339, t: "颐和园" }, { x: 308, y: 382, t: "北京西山国\n家森林公园" },
  { x: 217, y: 441, t: "北京冬奥公园" }, { x: 179, y: 472, t: "天门山森林公园" }, { x: 227, y: 512, t: "千灵山" },
  { x: 20, y: 479, t: "峪壶峰" }, { x: 144, y: 520, t: "将军坨风景区" }, { x: 445, y: 329, t: "圆明园" },
  { x: 453, y: 290, t: "清河站", c: "blue" }, { x: 733, y: 345, t: "东郊森林公园" }, { x: 708, y: 392, t: "金盏森林公园" },
  { x: 624, y: 399, t: "北京朝阳站", c: "blue" }, { x: 511, y: 490, t: "北京南站", c: "blue" }, { x: 706, y: 548, t: "亦庄站", c: "blue" },
  { x: 737, y: 496, t: "北京通州\n文化旅游区", end: true }, { x: 832, y: 462, t: "北京(通州)\n文化旅游景区" },
  { x: 853, y: 528, t: "张家湾公园" }, { x: 440, y: 534, t: "南苑森林\n湿地公园" },
  { x: 229, y: 406, t: "门头沟区", c: "dark", s: 14 }, { x: 337, y: 445, t: "石景山区", c: "dark", s: 14 },
  { x: 399, y: 497, t: "丰台区", c: "dark", s: 14 }, { x: 410, y: 383, t: "海淀区", c: "dark", s: 14 },
  { x: 349, y: 85, t: "昌平区", c: "dark", s: 14 }, { x: 722, y: 188, t: "顺义区", c: "dark", s: 14 },
  { x: 723, y: 440, t: "通州区", c: "dark", s: 14 }, { x: 504, y: 445, t: "北京市", c: "road", s: 16 },
  { x: 340, y: 144, t: "北六环路", c: "road", s: 14, rot: -8 }, { x: 569, y: 162, t: "北六环路", c: "road", s: 14, rot: 9 },
  { x: 821, y: 331, t: "京秦高速", c: "road", s: 14, rot: -3 }, { x: 641, y: 450, t: "东\n五\n环", c: "road", s: 14 },
];
const parks: [number, number][] = [
  [291, 15], [179, 108], [164, 193], [237, 178], [243, 214], [209, 250], [570, 19], [879, 26], [446, 184], [576, 193],
  [800, 225], [134, 273], [243, 271], [140, 304], [89, 332], [412, 337], [337, 364], [301, 440], [168, 471], [243, 494],
  [9, 478], [134, 519], [434, 328], [696, 392], [749, 502], [816, 468], [841, 527], [500, 539],
];
const sights: [number, number][] = [[35, 46], [379, 17]];
const stations: [number, number][] = [[695, 240], [443, 289], [614, 396], [500, 488], [695, 547], [888, 401]];
const or = "#ef9f65";
const gr = "#4fd0a0";
const shields: [number, number, string, string, string?][] = [
  [272, 92, "S218", or], [384, 46, "S214", or], [758, 26, "S227", or], [797, 84, "S229", or], [867, 75, "S224", or],
  [646, 134, "S335", or], [884, 142, "S306", or], [828, 184, "S305", or], [530, 226, "S213", or], [782, 549, "S303", or],
  [327, 36, "G7", gr, "#d0645c"], [362, 166, "G7", gr, "#d0645c"], [208, 135, "S3801", gr, "#e0b040"],
  [602, 106, "G45", gr, "#a8665c"], [471, 145, "G4501", gr, "#a8665c"], [794, 295, "S32", gr, "#e0b040"],
  [826, 413, "G102", gr, "#d0645c"], [315, 462, "G108", gr, "#d0645c"], [87, 305, "G109", "#ee6a6a"], [884, 548, "G103", "#ee6a6a"],
];
const markers: [number, number][] = [
  [222, 14], [384, 40], [352, 96], [715, 210], [353, 341], [403, 346], [410, 361], [584, 401], [522, 402], [443, 410],
  [254, 411], [539, 411], [493, 419], [527, 419], [323, 419], [509, 421], [469, 427], [523, 433], [545, 433], [503, 434],
  [265, 439], [715, 439], [503, 444], [485, 446], [507, 455], [512, 457], [504, 463], [483, 464], [460, 465], [469, 474],
  [522, 477], [202, 493], [381, 495],
];
const ParkPin = () => (
  <svg width="18" height="22" viewBox="0 0 18 22">
    <path d="M9 0a9 9 0 0 1 4.500 16.500L9 21l-4.500-4.500A9 9 0 0 1 9 0z" fill="#42bb7c" />
    <path d="M5 12V8.500L6.500 6.500 8 8.500V12zM8.700 12V5.500L10.500 4l2.500 3v5zM4 12.500h10V14H4z" fill="#fff" />
  </svg>
);
const SightPin = () => (
  <svg width="18" height="20" viewBox="0 0 18 20">
    <circle cx="9" cy="9" r="9" fill="#bf5a52" />
    <path d="M4.500 5.500h9V8h-1v5h-2v-3h-3v3h-2V8h-1z" fill="#fff" />
  </svg>
);
const StationPin = () => (
  <svg width="18" height="21" viewBox="0 0 18 21">
    <path d="M3 0h12a3 3 0 0 1 3 3v12a2 2 0 0 1-2 2h-4l-3 4-3-4H2a2 2 0 0 1-2-2V3a3 3 0 0 1 3-3z" fill="#4a6bc9" />
    <path d="M6 11.500A4 4 0 1 1 12 11.500M5 13.500h8M9 8v3" fill="none" stroke="#fff" strokeWidth="1.500" />
  </svg>
);
const Marker = () => (
  <svg width="31" height="27" viewBox="0 0 31 27">
    <path d="M10 25 17 19c4-3 9-2 5 1-3 2-7 3-12 5z" fill="rgba(60,60,60,.45)" />
    <path d="M10 25.500C8 20 1 16 1 10a9 9 0 0 1 18 0c0 6-7 10-9 15.500z" fill="#d91a2d" stroke="#b51224" strokeWidth="0.700" />
  </svg>
);
const PopupShadow = () => (
  <svg width="885" height="551" viewBox="0 0 885 551">
    <defs>
      <filter id="soft" x="-20%" y="-20%" width="140%" height="140%"><feGaussianBlur stdDeviation="5" /></filter>
    </defs>
    <path d="M475 372 650 320 750 312 822 320 800 345 765 378 742 390 600 385z" fill="rgba(50,50,50,.42)" filter="url(#soft)" />
  </svg>
);
const PopupTail = () => (
  <svg width="885" height="551" viewBox="0 0 885 551">
    <path d="M592 374.500 590 398 618 374.500z" fill="#fff" />
  </svg>
);
const HandCursor = () => (
  <svg width="16" height="18" viewBox="0 0 16 20">
    <path d="M4 12V2.500a1.500 1.500 0 0 1 3 0V8l1-.5 2 .5 1.500.3 2 .7 1 1.500V14l-2 5H6.500L2 13c-1-1.500 1-2.500 2-1z" fill="#fff" stroke="#111" />
  </svg>
);
const Paw = () => (
  <svg width="23" height="25" viewBox="0 0 23 25" fill="#2a36d4">
    <ellipse cx="8" cy="4.500" rx="2.500" ry="3.700" /><ellipse cx="14.500" cy="4.500" rx="2.500" ry="3.700" />
    <ellipse cx="3" cy="10" rx="2.400" ry="3.200" /><ellipse cx="20" cy="10" rx="2.400" ry="3.200" />
    <path d="M11.500 10c4 0 4 4 7.500 7 3 4-1 7.500-4 6.500-2-.5-5-.5-7 0-3 1-7-2.500-4-6.500 3.500-3 3.500-7 7.500-7z" />
    <text x="11.500" y="21" fontSize="9" fontWeight="700" fill="#fff" textAnchor="middle">du</text>
  </svg>
);

const CityMap = () => (
  <MapBox>
    <MapArt />
    {shields.map(([x, y, t, bg, top]) => <Shield key={`${x}${t}`} $x={x} $y={y} $bg={bg} $top={top}>{t}</Shield>)}
    {parks.map(([x, y]) => <Spot key={`${x}-${y}`} $x={x - 9} $y={y - 10}><ParkPin /></Spot>)}
    {sights.map(([x, y]) => <Spot key={x} $x={x - 9} $y={y - 9}><SightPin /></Spot>)}
    {stations.map(([x, y]) => <Spot key={`${x}-${y}`} $x={x - 9} $y={y - 9}><StationPin /></Spot>)}
    {labels.map((l) => (
      <MapLabel key={`${l.x}-${l.y}`} $x={l.x} $y={l.y} $tone={l.c || "park"} $size={l.s || 12} $end={l.end} $rot={l.rot}>{l.t}</MapLabel>
    ))}
    <PopupShadow />
    {markers.map(([x, y]) => <Spot key={`${x}-${y}`} $x={x - 10} $y={y - 25}><Marker /></Spot>)}
    <Popup>
      <p>标记信息</p>
      <p>交通状况: 平均速度：68km/h</p>
      <p>描述: 朝阳区政府</p>
      <PopupClose aria-label="关闭"><X size={14} strokeWidth={3} /></PopupClose>
    </Popup>
    <PopupTail />
    <Spot $x={579} $y={386}><HandCursor /></Spot>
    <CityPicker>
      <CitySelect aria-label="城市"><option>北京市</option></CitySelect>
    </CityPicker>
    <MapTypes>
      <MapType $on>地图</MapType>
      <MapType>混合</MapType>
    </MapTypes>
    <BaiduLogo>Bai<Paw /><LogoSmall>地图</LogoSmall></BaiduLogo>
    <Copyright>© 2025 Baidu - GS(2025)4125号 - 甲测资字11111342 - 京ICP证030173号 - Data © 百度智图</Copyright>
  </MapBox>
);

/* ---------- data ---------- */

const TruckIcon = styled(FaTruck)`
  transform: scaleX(-1);
`;
const leftNav = [
  { t: "数据概览", icon: <DocIcon />, on: true },
  { t: "车辆监控", icon: <TruckIcon size={16} /> },
  { t: "地图界面", icon: <FaUniversity size={16} color="#b4b7bc" /> },
  { t: "查询统计", icon: <SolidBars /> },
];
const rightNav = [
  { t: "信息录入", icon: <GearIcon /> },
  { t: "表格界面", icon: <FormIcon /> },
  { t: "后台管理", icon: <FormIcon /> },
  { t: "退出登录", icon: <FormIcon /> },
];
const stats = [
  { color: "#f6fb4c", items: [["car", "永和路车辆数(辆)", "45505"], ["up", "超速车辆(辆)", "72"]] },
  { color: "#38f5e4", items: [["timer", "和平大道车辆数（辆）", "45507"], ["scale", "闯红灯车辆总数（辆）", "71"]] },
  { color: "#e63a55", items: [["hourglass", "全市车辆数（辆）", "747738"], ["scale", "日平均违法车辆（辆）", "107"]] },
];
const tables = [
  { title: "路口拥堵情况", cols: ["拥堵排名", "路口", "预计拥堵时间（min）"], w: [22, 22, 56], row: ["1", "永和路", "11"] },
  { title: "路口车流量统计", cols: ["排名", "路口", "车流量总数（辆）"], w: [14, 28, 58], row: ["1", "永和路", "14543"] },
  { title: "自适应信号灯", cols: ["路口", "红灯时间（s）", "绿灯时间（s）"], w: [22, 39, 39], row: ["永和路", "6", "39"] },
  { title: "拥堵解决排名", cols: ["排名", "路口", "时长（min）"], w: [17, 32, 51], row: ["1", "南湖路", "4"] },
];
const starPattern = [
  [83, 54, 1.5], [99, 65, 1], [64, 78, 1], [163, 87, 1.2], [168, 96, 1.2], [210, 96, 1], [257, 80, 1], [259, 90, 1.4], [141, 122, 2.2],
  [198, 119, 1], [224, 110, 1], [327, 261, 1.3], [641, 89, 1.6], [621, 116, 1], [343, 325, 1.8], [304, 343, 1], [83, 423, 1.8],
  [219, 566, 1], [484, 380, 1], [158, 656, 1.6], [27, 729, 1.2], [401, 762, 2], [340, 761, 1.2], [489, 686, 1.2], [293, 883, 1.2], [357, 888, 1], [450, 975, 1],
];

export default function App() {
  return (
    <Window>
      <GlobalStyle />
      <TabStrip>
        <SideToggle aria-label="侧栏"><Minus size={9} /></SideToggle>
        <TabManager>标签管理</TabManager>
        <BrowserTab>
          <Globe size={12} strokeWidth={2.5} />
          <TabName>首页界面</TabName>
          <IconButton $w={12} aria-label="关闭标签"><X size={11} /></IconButton>
        </BrowserTab>
        <IconButton $w={46} aria-label="新建标签"><Plus size={13} /></IconButton>
        <Spring />
        <IconButton $w={31} aria-label="最小化"><Minus size={10} /></IconButton>
        <IconButton $w={31} aria-label="还原"><Copy size={9} /></IconButton>
        <IconButton $w={24} aria-label="关闭"><X size={11} /></IconButton>
      </TabStrip>
      <Toolbar>
        <IconButton $w={28} aria-label="更多"><ChevronsRight size={14} strokeWidth={1.5} /></IconButton>
        <IconButton $w={32} aria-label="后退"><ArrowLeft size={15} strokeWidth={1.5} /></IconButton>
        <IconButton $w={26} $dim aria-label="前进"><ArrowRight size={15} strokeWidth={1.5} /></IconButton>
        <IconButton $w={28} aria-label="刷新"><RotateCw size={13} /></IconButton>
        <IconButton $w={28} aria-label="主页"><House size={14} strokeWidth={1.5} /></IconButton>
        <AddressBar>
          <Search size={12} />
          <AddressInput aria-label="地址" defaultValue="127.0.0.1:5000/index" />
          <IconButton $w={20} aria-label="缩放"><ZoomIn size={13} color="#50545a" /></IconButton>
          <ZoomLevel>130%</ZoomLevel>
        </AddressBar>
        <AddressActions>
          <IconButton $w={24} aria-label="加速"><Zap size={11} fill="#50545a" /></IconButton>
          <IconButton $w={30} aria-label="收藏"><Star size={13} strokeWidth={1.5} /></IconButton>
        </AddressActions>
        <AiButton>AI+</AiButton>
        <IconButton $w={32} aria-label="扩展"><Puzzle size={13} strokeWidth={1.5} /></IconButton>
        <IconButton $w={28} aria-label="菜单"><Menu size={14} strokeWidth={1.5} /></IconButton>
        <IconButton $w={28} aria-label="用户"><UserRound size={13} strokeWidth={1.5} /><RedDot /></IconButton>
        <IconButton $w={22} aria-label="助手"><Globe size={12} /></IconButton>
      </Toolbar>
      <Viewport>
        <Page>
          <StarField>
            {[0, 654, 1308].map((dx) => starPattern.map(([x, y, r]) => (
              <circle key={`${dx}-${x}-${y}`} cx={x + dx} cy={y} r={r} fill="#28545a" opacity="0.65" />
            )))}
          </StarField>
          <Header>
            <Nav>{leftNav.map((n) => <NavLink key={n.t} href="#" $active={n.on}>{n.icon}{n.t}</NavLink>)}</Nav>
            <Title>交通数据分析</Title>
            <Nav $end>{rightNav.map((n) => <NavLink key={n.t} href="#">{n.icon}{n.t}</NavLink>)}</Nav>
          </Header>
          <Stats>
            {stats.map((s) => (
              <StatCard key={s.color} $color={s.color}>
                {s.items.map(([icon, label, value]) => (
                  <Stat key={label}>
                    <StatIcon name={icon} />
                    <StatText>
                      <StatLabel>{label}</StatLabel>
                      <StatValue>{value}</StatValue>
                    </StatText>
                  </Stat>
                ))}
              </StatCard>
            ))}
          </Stats>
          <Main>
            <Column>
              <Panel $h={282}>
                <Head icon={<CarIcon />} text="车辆类型统计" />
                <PieBody>
                  <Donut />
                  <Legend>
                    {vehicleTypes.map((v) => (
                      <LegendItem key={v.name}>{v.name}<Swatch $color={v.color} /></LegendItem>
                    ))}
                  </Legend>
                </PieBody>
              </Panel>
              <Panel $h={282}>
                <Head icon={<MonitorIcon />} text="车辆状态统计" />
                <ChartBody><Radar /></ChartBody>
              </Panel>
            </Column>
            <Panel $h={588} $big>
              <Head wide icon={<RouteIcon />} text="车辆行驶地图" />
              <CityMap />
            </Panel>
            <Column>
              <Panel $h={282}>
                <Head icon={<BarsIcon />} text="拥堵监测" />
                <ChartBody><Gauge /></ChartBody>
              </Panel>
              <PlainPanel>
                <ChartLegend>
                  <ChartLegendItem><Swatch $color="linear-gradient(#18fbff, #3c9fe2)" />预计拥堵</ChartLegendItem>
                  <ChartLegendItem><Swatch $color="#54556f" />实时监测</ChartLegendItem>
                  <ChartLegendItem><LineMark color="#2182b4" />疏散</ChartLegendItem>
                  <ChartLegendItem><LineMark color="#c0304a" />汇入</ChartLegendItem>
                </ChartLegend>
                <ChartBody><Combo /></ChartBody>
              </PlainPanel>
            </Column>
            {tables.map((t) => (
              <Panel key={t.title} $h={282}>
                <Head icon={<BarsIcon />} text={t.title} />
                <DataTable>
                  <colgroup>{t.w.map((w, i) => <Col key={i} $w={w} />)}</colgroup>
                  <thead><tr>{t.cols.map((c) => <th key={c} scope="col">{c}</th>)}</tr></thead>
                  <tbody><tr>{t.row.map((c, i) => <td key={i}>{c}</td>)}</tr></tbody>
                </DataTable>
              </Panel>
            ))}
          </Main>
        </Page>
        <ScrollTrack />
      </Viewport>
      <Bubble aria-label="助手" />
      <Watermark>CSDN @源码之家</Watermark>
    </Window>
  );
}
